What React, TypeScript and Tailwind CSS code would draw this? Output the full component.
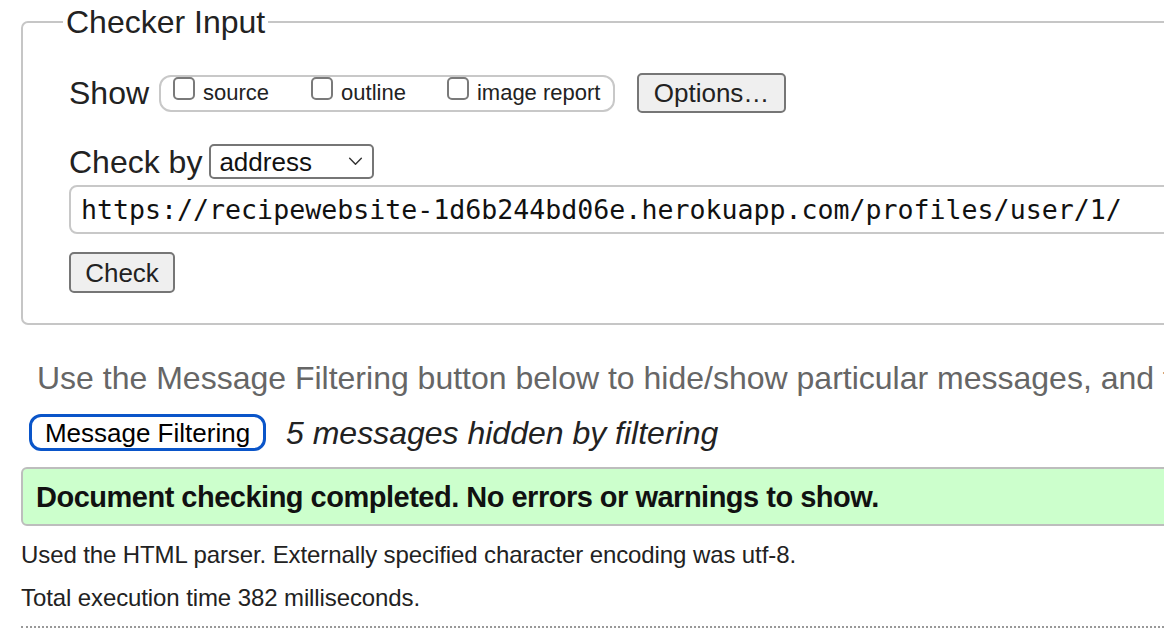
import React from 'react';

// W3C-style "Checker Input" form plus the result summary below it.

function Box({ label }: { label: string }) {
  return (
    <label className="flex items-center">
      <input
        type="checkbox"
        className="appearance-none w-[22px] h-[23px] mb-[10px] border-2 border-[#7a7a7a] rounded-[5px] bg-white"
      />
      <span className="ml-[8px] text-[22px] leading-[26px]">{label}</span>
    </label>
  );
}

export default function App() {
  return (
    <div className="w-[1164px] h-[630px] overflow-hidden bg-white text-[#222] font-['Liberation_Sans',Arial,sans-serif]">
      <div className="w-[1300px] pl-[21px] pt-[4px]">
        <fieldset className="border-2 border-[#c6c6c6] rounded-[7px] pl-[40px] pb-[30px]">
          <legend className="px-[3px] text-[32px] leading-[36px]">Checker Input</legend>
          <div className="ml-[6px]">
            {/* show options */}
            <div className="mt-[33px] h-[40px] flex items-center">
              <span className="text-[32px] leading-[36px]">Show</span>
              <div className="ml-[10px] h-[37px] w-[456px] flex items-center border-2 border-[#c8c8c8] rounded-[12px] pl-[12px]">
                <Box label="source" />
                <div className="w-[42px]" />
                <Box label="outline" />
                <div className="w-[41px]" />
                <Box label="image report" />
              </div>
              <button className="ml-[22px] w-[149px] h-[40px] bg-[#efefef] border-2 border-[#767676] rounded-[5px] text-[26px] leading-[30px]">
                Options…
              </button>
            </div>

            {/* check by */}
            <div className="mt-[31px] h-[35px] flex items-center">
              <span className="text-[32px] leading-[36px]">Check by</span>
              <div className="ml-[7px] w-[165px] h-[35px] flex items-center justify-between border-2 border-[#767676] rounded-[5px] pl-[8px] pr-[9px]">
                <span className="text-[26px] leading-[30px] text-[#111]">address</span>
                <svg viewBox="0 0 16 10" className="w-[15px] h-[9px]" fill="none" stroke="#333" strokeWidth={1.6} strokeLinecap="round" strokeLinejoin="round">
                  <path d="M1.5 1.5 8 8l6.5-6.5" />
                </svg>
              </div>
            </div>

            <div className="mt-[6px] h-[49px] flex items-center border-2 border-[#c8c8c8] rounded-[8px] pl-[10px] w-[1200px]">
              <span className="text-[26.6px] leading-[30px] text-[#111] whitespace-nowrap font-['DejaVu_Sans_Mono',monospace]">
                https://recipewebsite-1d6b244bd06e.herokuapp.com/profiles/user/1/
              </span>
            </div>

            <button className="mt-[18px] block w-[106px] h-[41px] bg-[#efefef] border-2 border-[#767676] rounded-[5px] text-[26px] leading-[30px]">
              Check
            </button>
          </div>
        </fieldset>

        <p className="mt-[35px] ml-[16px] text-[32px] leading-[36px] text-[#666] whitespace-nowrap">
          Use the Message Filtering button below to hide/show particular messages, and to see total counts of errors and warnings.
        </p>

        <div className="mt-[18px] ml-[8px] h-[37px] flex items-center">
          <button className="h-[37px] w-[237px] border-[3px] border-[#0a55c9] rounded-[12px] bg-white text-black text-[26px] leading-[30px]">
            Message Filtering
          </button>
          <span className="ml-[20px] italic text-[32px] leading-[36px]">5 messages hidden by filtering</span>
        </div>

        <div className="mt-[16px] h-[59px] flex items-center bg-[#ccffcc] border-2 border-[#bdbdbd] rounded-[6px] pl-[13px]">
          <span className="font-bold text-[29px] leading-[34px] tracking-[-0.5px] text-[#111]">
            Document checking completed. No errors or warnings to show.
          </span>
        </div>

        <p className="mt-[14px] text-[24px] leading-[30px] tracking-[-0.1px]">
          Used the HTML parser. Externally specified character encoding was utf-8.
        </p>
        <p className="mt-[13px] text-[24px] leading-[30px] tracking-[-0.1px]">
          Total execution time 382 milliseconds.
        </p>
        <div className="mt-[13px] border-t-2 border-dotted border-[#999]" />
      </div>
    </div>
  );
}
